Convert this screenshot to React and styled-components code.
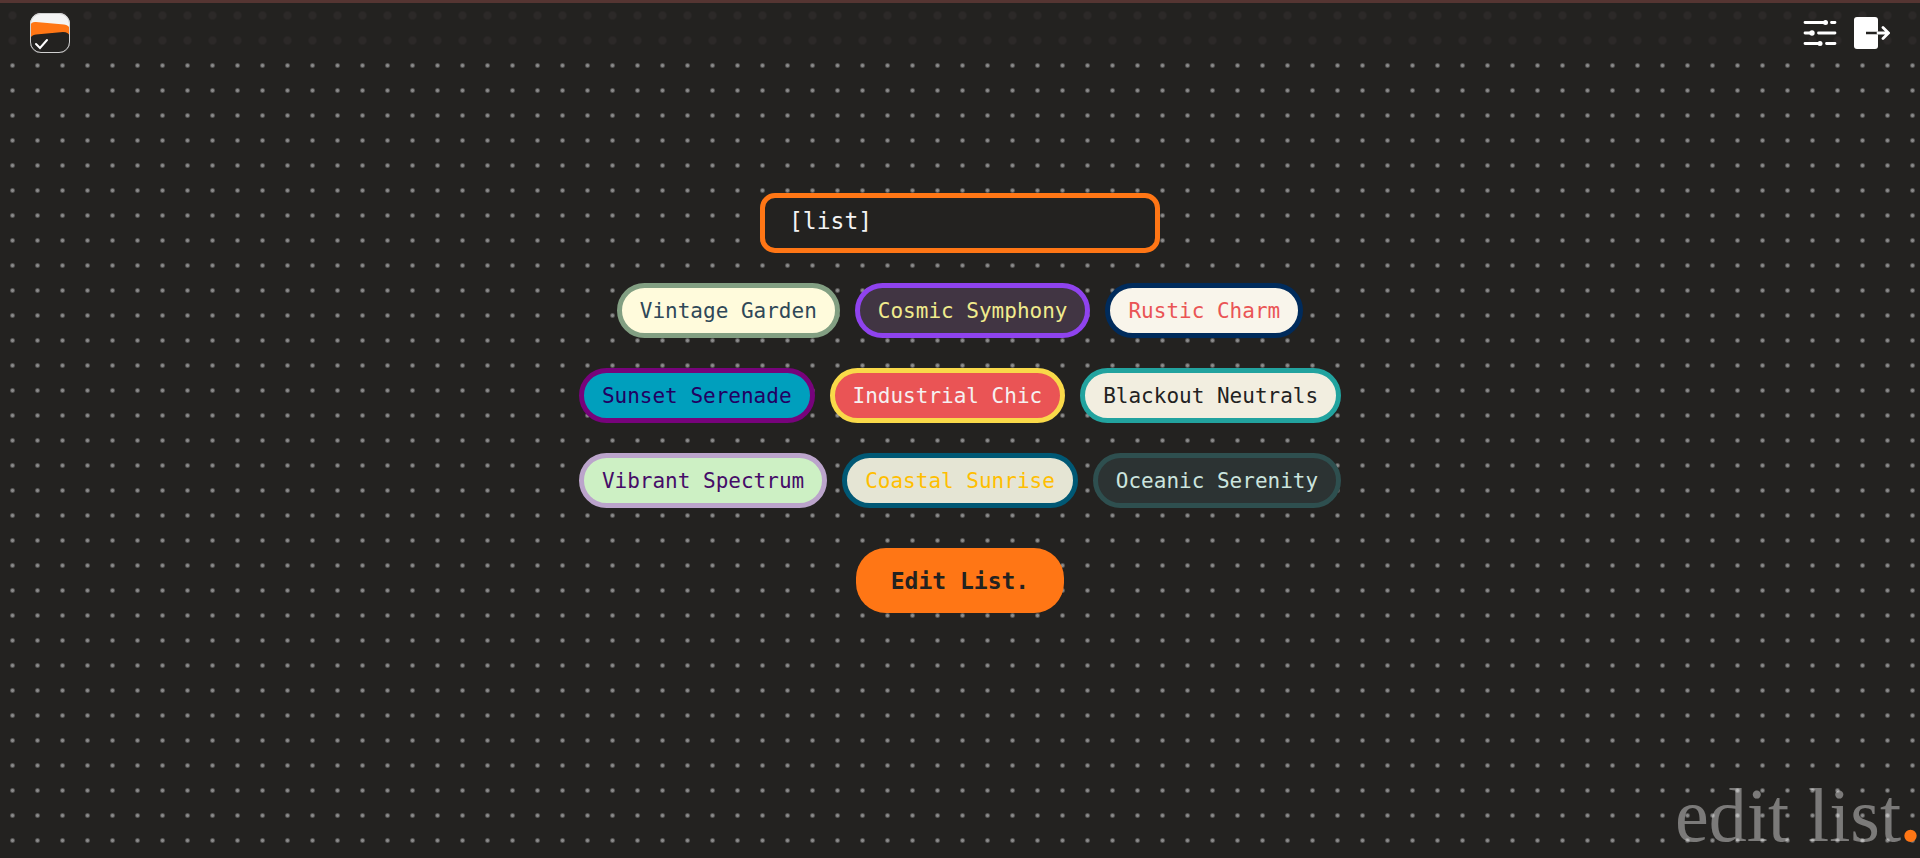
import React, { useState } from "react";
import styled, { createGlobalStyle } from "styled-components";

const ink = "#232220";
const orange = "#ff7615";
const mono = `"DejaVu Sans Mono", "Liberation Mono", monospace`;

const GlobalStyle = createGlobalStyle`
  *, *::before, *::after { box-sizing: border-box; }
  body {
    margin: 0;
    background: ${ink};
    font-family: ${mono};
  }
`;

const Page = styled.div`
  min-height: 100vh;
  display: flex;
  flex-direction: column;
  border-top: 3px solid #553532;
  background-image: radial-gradient(circle, #8a8a8a 1px, transparent 3px);
  background-size: 25px 25px;
  overflow: hidden;
`;

const Header = styled.header`
  display: flex;
  align-items: center;
  justify-content: space-between;
  height: 50px;
  padding: 10px 30px 0;
  background-color: ${ink};
  background-image: radial-gradient(circle, #2c2928 3px, transparent 5px);
  background-size: 25px 25px;
`;

const HomeLink = styled.a`
  display: flex;
`;

const Actions = styled.nav`
  display: flex;
  align-items: center;
  gap: 15px;
`;

const IconButton = styled.button`
  display: flex;
  padding: 0;
  border: 0;
  background: none;
  cursor: pointer;
`;

const Form = styled.form`
  display: flex;
  flex-direction: column;
  align-items: center;
  padding-top: 140px;
`;

const NameInput = styled.input`
  width: 400px;
  max-width: 90%;
  height: 60px;
  padding: 0 24px 4px;
  border: 5px solid ${orange};
  border-radius: 15px;
  outline: 0;
  background: ${ink};
  color: #f3f3f3;
  font-family: inherit;
  font-size: 23px;
`;

const Themes = styled.div`
  display: flex;
  flex-wrap: wrap;
  justify-content: center;
  gap: 30px 15px;
  max-width: 800px;
  margin: 30px 0 40px;
`;

const ThemeButton = styled.button`
  height: 55px;
  padding: 0 18px;
  border: 5px solid ${(p) => p.$edge};
  border-radius: 30px;
  background: ${(p) => p.$fill};
  color: ${(p) => p.$text};
  font-family: inherit;
  font-size: 21px;
  white-space: nowrap;
  cursor: pointer;
`;

const SubmitButton = styled.button`
  height: 65px;
  padding: 0 35px;
  border: 0;
  border-radius: 30px;
  background: ${orange};
  color: ${ink};
  font-family: inherit;
  font-size: 23px;
  font-weight: 700;
  cursor: pointer;
`;

const PageTitle = styled.h1`
  margin: auto 0 0;
  color: rgba(255, 255, 255, 0.4);
  font-family: "Liberation Serif", serif;
  font-size: 76px;
  font-weight: 400;
  line-height: 85px;
  text-align: right;
`;

const Stop = styled.span`
  color: ${orange};
  font-weight: 700;
`;

const themes = [
  { name: "Vintage Garden", fill: "#fffbdc", edge: "#829f82", text: "#2f4858" },
  { name: "Cosmic Symphony", fill: "#413543", edge: "#8f43ee", text: "#f0eb8d" },
  { name: "Rustic Charm", fill: "#f9f5eb", edge: "#002b5b", text: "#ea5455" },
  { name: "Sunset Serenade", fill: "#009fbd", edge: "#77037b", text: "#210062" },
  { name: "Industrial Chic", fill: "#ea5455", edge: "#f9d949", text: "#f5f0f0" },
  { name: "Blackout Neutrals", fill: "#f2eee0", edge: "#22a39f", text: "#222222" },
  { name: "Vibrant Spectrum", fill: "#cdf0c4", edge: "#bba4cb", text: "#460c68" },
  { name: "Coastal Sunrise", fill: "#e5e5d4", edge: "#005874", text: "#ffbe00" },
  { name: "Oceanic Serenity", fill: "#2c3333", edge: "#2e4f4f", text: "#cbe4de" },
];

const Logo = () => (
  <svg width="40" height="40" viewBox="0 0 40 40" aria-hidden="true">
    <defs>
      <clipPath id="tile">
        <rect width="40" height="40" rx="11" />
      </clipPath>
    </defs>
    <g clipPath="url(#tile)">
      <rect width="40" height="40" fill="#f4f4f4" />
      <path d="M0 13Q1 8.500 6 9L34 11.500Q39 12 40 16V30H0Z" fill={orange} />
      <path d="M0 26Q1 22 6 21.500L33 19Q39 19 40 24V40H0Z" fill={ink} />
    </g>
    <rect x=".5" y=".5" width="39" height="39" rx="10.500" fill="none" stroke="#d0d0d0" />
    <path d="M6 31L10 35L17 27" fill="none" stroke="#fff" strokeWidth="2" strokeLinecap="round" />
  </svg>
);

const Sliders = () => (
  <svg width="34" height="26" viewBox="0 0 34 26" aria-hidden="true">
    <path
      d="M2 2.500H21M28.500 2.500H32M2 13H9M15.500 13H32M2 23.500H17M23.500 23.500H32"
      stroke="#fff"
      strokeWidth="2.800"
      strokeLinecap="round"
    />
    <g fill="#fff">
      <circle cx="22.500" cy="2.500" r="2.500" />
      <circle cx="9" cy="13" r="2.700" />
      <circle cx="17" cy="23.500" r="2.500" />
    </g>
  </svg>
);

const LogOut = () => (
  <svg width="38" height="34" viewBox="0 0 38 34" fill="none" aria-hidden="true">
    <rect x="2" y="1" width="24" height="32" rx="3" fill="#fff" />
    <path d="M14 17H26" stroke={ink} strokeWidth="2.500" />
    <path d="M26 17H36M31 11.500L36.500 17L31 22.500" stroke="#fff" strokeWidth="2.800" strokeLinecap="round" />
  </svg>
);

export default function App() {
  const [name, setName] = useState("[list]");
  return (
    <>
      <GlobalStyle />
      <Page>
        <Header>
          <HomeLink href="#" aria-label="Home">
            <Logo />
          </HomeLink>
          <Actions>
            <IconButton type="button" aria-label="Settings">
              <Sliders />
            </IconButton>
            <IconButton type="button" aria-label="Log out">
              <LogOut />
            </IconButton>
          </Actions>
        </Header>
        <Form onSubmit={(e) => e.preventDefault()}>
          <NameInput
            aria-label="List name"
            value={name}
            onChange={(e) => setName(e.target.value)}
          />
          <Themes>
            {themes.map((t) => (
              <ThemeButton key={t.name} type="button" $fill={t.fill} $edge={t.edge} $text={t.text}>
                {t.name}
              </ThemeButton>
            ))}
          </Themes>
          <SubmitButton type="submit">Edit List.</SubmitButton>
        </Form>
        <PageTitle>
          edit list<Stop>.</Stop>
        </PageTitle>
      </Page>
    </>
  );
}
